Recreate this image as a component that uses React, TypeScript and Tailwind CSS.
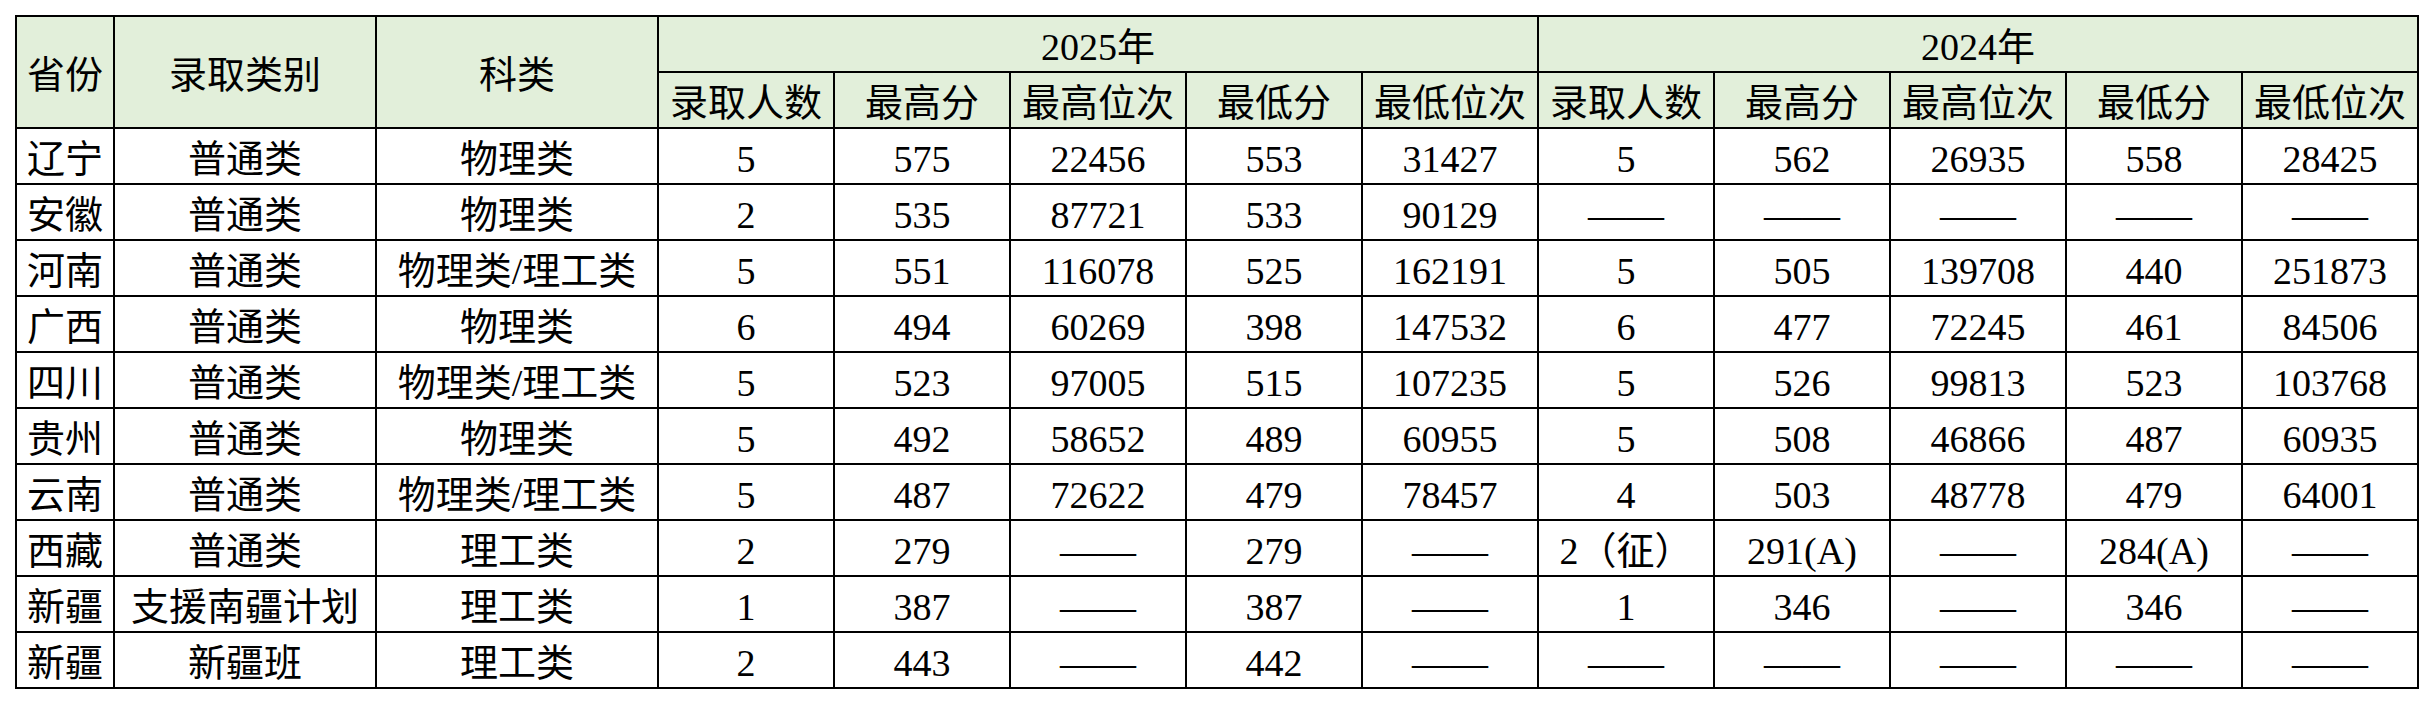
const years = ["2025年", "2024年"];
const metrics = ["录取人数", "最高分", "最高位次", "最低分", "最低位次"];

const D = "——";

const rows: string[][] = [
  ["辽宁", "普通类", "物理类", "5", "575", "22456", "553", "31427", "5", "562", "26935", "558", "28425"],
  ["安徽", "普通类", "物理类", "2", "535", "87721", "533", "90129", D, D, D, D, D],
  ["河南", "普通类", "物理类/理工类", "5", "551", "116078", "525", "162191", "5", "505", "139708", "440", "251873"],
  ["广西", "普通类", "物理类", "6", "494", "60269", "398", "147532", "6", "477", "72245", "461", "84506"],
  ["四川", "普通类", "物理类/理工类", "5", "523", "97005", "515", "107235", "5", "526", "99813", "523", "103768"],
  ["贵州", "普通类", "物理类", "5", "492", "58652", "489", "60955", "5", "508", "46866", "487", "60935"],
  ["云南", "普通类", "物理类/理工类", "5", "487", "72622", "479", "78457", "4", "503", "48778", "479", "64001"],
  ["西藏", "普通类", "理工类", "2", "279", D, "279", D, "2（征）", "291(A)", D, "284(A)", D],
  ["新疆", "支援南疆计划", "理工类", "1", "387", D, "387", D, "1", "346", D, "346", D],
  ["新疆", "新疆班", "理工类", "2", "443", D, "442", D, D, D, D, D, D],
];

const cell = "border-2 border-black text-center align-middle h-[56px] p-0 pt-[6px] leading-[44px] whitespace-nowrap";
const head = cell + " bg-[#e2efda]";

export default function App() {
  return (
    <div
      className="w-[2434px] h-[704px] bg-white pt-[15px] pl-[15px] text-black text-[38px]"
      style={{ fontFamily: '"Liberation Serif", "Noto Sans CJK SC", serif' }}
    >
      <table className="table-fixed border-collapse w-[2404px]">
        <colgroup>
          <col className="w-[98px]" />
          <col className="w-[262px]" />
          <col className="w-[282px]" />
          {Array.from({ length: 10 }).map((_, i) => (
            <col key={i} className="w-[176px]" />
          ))}
        </colgroup>
        <thead>
          <tr>
            <th rowSpan={2} className={head + " font-normal"}>省份</th>
            <th rowSpan={2} className={head + " font-normal"}>录取类别</th>
            <th rowSpan={2} className={head + " font-normal"}>科类</th>
            {years.map((y) => (
              <th key={y} colSpan={5} className={head + " font-normal"}>
                {y}
              </th>
            ))}
          </tr>
          <tr>
            {years.map((y) =>
              metrics.map((m) => (
                <th key={y + m} className={head + " font-normal"}>
                  {m}
                </th>
              ))
            )}
          </tr>
        </thead>
        <tbody>
          {rows.map((r, i) => (
            <tr key={i}>
              {r.map((v, j) => (
                <td key={j} className={cell}>
                  {v}
                </td>
              ))}
            </tr>
          ))}
        </tbody>
      </table>
    </div>
  );
}
